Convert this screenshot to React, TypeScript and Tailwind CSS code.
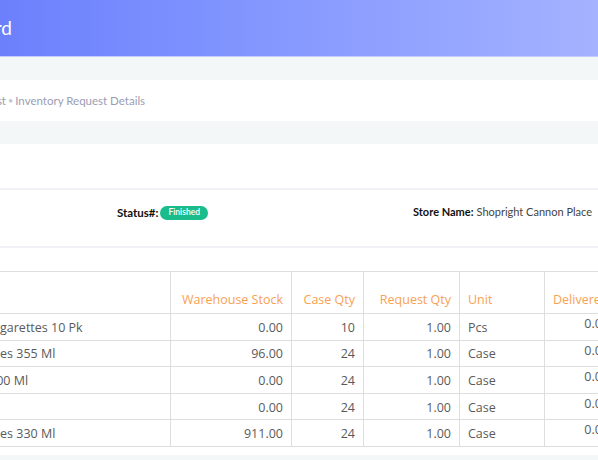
import React from 'react';

type Row = {
  name: string;
  stock: string;
  caseQty: number;
  requestQty: string;
  unit: string;
  delivered: string;
};

const rows: Row[] = [
  { name: 'Cigarettes 10 Pk', stock: '0.00', caseQty: 10, requestQty: '1.00', unit: 'Pcs', delivered: '0.00' },
  { name: 'Ales 355 Ml', stock: '96.00', caseQty: 24, requestQty: '1.00', unit: 'Case', delivered: '0.00' },
  { name: '500 Ml', stock: '0.00', caseQty: 24, requestQty: '1.00', unit: 'Case', delivered: '0.00' },
  { name: '', stock: '0.00', caseQty: 24, requestQty: '1.00', unit: 'Case', delivered: '0.00' },
  { name: 'Ales 330 Ml', stock: '911.00', caseQty: 24, requestQty: '1.00', unit: 'Case', delivered: '0.00' },
];

const App: React.FC = () => {
  return (
    <div className="w-[598px] h-[460px] overflow-hidden bg-[#f3f7f7] font-['Lato',sans-serif]">
      {/* top bar */}
      <div className="h-[57px] flex items-center border-b border-[#c3cbff] bg-gradient-to-r from-[#6c80fd] to-[#a4b2ff]">
        <div className="-ml-[250px] w-[262px] shrink-0 text-right text-white text-[19px] leading-none pb-[2px]">
          Dashboard
        </div>
      </div>

      <div className="h-[23px]" />

      {/* breadcrumb */}
      <div className="h-[41px] bg-white flex items-center">
        <div className="-ml-[200px] w-[206px] shrink-0 text-right text-[11.5px] text-[#9b9db3] whitespace-nowrap">
          Inventory Request List
        </div>
        <span className="mx-[2px] text-[9px] text-[#c4c6d4]">•</span>
        <span className="text-[11.5px] text-[#9b9db3] whitespace-nowrap">Inventory Request Details</span>
      </div>

      <div className="h-[23px]" />

      {/* card */}
      <div className="bg-white h-[311px]">
        <div className="h-[46px] border-b-2 border-[#f0f0f6]" />

        <div className="h-[58px] flex items-center pb-[11px] border-b-2 border-[#f0f0f6]">
          <div className="w-[208px] shrink-0 flex items-center justify-end gap-[2px]">
            <span className="text-[11.5px] font-bold text-[#111]">Status#:</span>
            <span className="h-[14px] px-[8px] rounded-full bg-[#1bbc8b] text-white text-[8.5px] font-semibold flex items-center">
              Finished
            </span>
          </div>
          <div className="w-[384px] shrink-0 flex justify-end items-center text-[11px] whitespace-nowrap">
            <span className="font-bold text-[#111]">Store Name:</span>
            <span className="ml-[3px] text-[#444]">Shopright Cannon Place</span>
          </div>
        </div>

        <div className="h-[23px]" />

        <table className="-ml-[20px] w-[640px] table-fixed border-collapse text-[12.5px] font-['Open_Sans',sans-serif]">
          <colgroup>
            <col className="w-[190px]" />
            <col className="w-[121px]" />
            <col className="w-[72px]" />
            <col className="w-[96px]" />
            <col className="w-[85px]" />
            <col className="w-[76px]" />
          </colgroup>
          <thead>
            <tr className="h-[42px] text-[#f9a152]">
              <th className="border border-[#dedede] align-bottom pb-[3px] px-[8px] text-left font-normal"></th>
              <th className="border border-[#dedede] align-bottom pb-[3px] px-[8px] text-right font-normal whitespace-nowrap">Warehouse Stock</th>
              <th className="border border-[#dedede] align-bottom pb-[3px] px-[8px] text-right font-normal whitespace-nowrap">Case Qty</th>
              <th className="border border-[#dedede] align-bottom pb-[3px] px-[8px] text-right font-normal whitespace-nowrap">Request Qty</th>
              <th className="border border-[#dedede] align-bottom pb-[3px] px-[8px] text-left font-normal">Unit</th>
              <th className="border border-[#dedede] align-bottom pb-[3px] px-[8px] text-left font-normal whitespace-nowrap">Delivered Qty</th>
            </tr>
          </thead>
          <tbody className="text-[#5a5a5a] leading-[18px]">
            {rows.map((r, i) => (
              <tr key={i} className="h-[26.6px]">
                <td className="border border-[#dedede] px-[8px] pt-[2px] whitespace-nowrap">{r.name}</td>
                <td className="border border-[#dedede] px-[8px] pt-[2px] text-right">{r.stock}</td>
                <td className="border border-[#dedede] px-[8px] pt-[2px] text-right">{r.caseQty}</td>
                <td className="border border-[#dedede] px-[8px] pt-[2px] text-right">{r.requestQty}</td>
                <td className="border border-[#dedede] px-[8px] pt-[2px] text-left">{r.unit}</td>
                <td className="border border-[#dedede] pl-[8px] pr-[11px] pt-[1px] text-right align-top">{r.delivered}</td>
              </tr>
            ))}
          </tbody>
        </table>
      </div>
    </div>
  );
};

export default App;
